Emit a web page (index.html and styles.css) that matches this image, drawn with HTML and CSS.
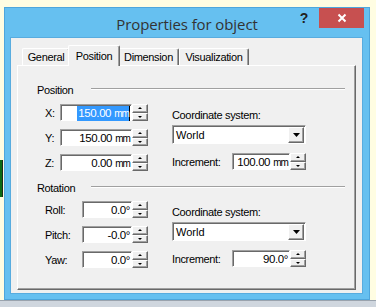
FILE: index.html
```html
<!DOCTYPE html>
<html>
<head>
    <meta charset="UTF-8">
    <title>Properties for object</title>
    <link rel="stylesheet" href="styles.css">
</head>
<body>
<div class="screen">
    <div class="desk">
        <div class="gutter"><div class="blob"></div></div>
        <div class="window">
            <div class="titlebar">
                <div></div>
                <div class="title">Properties for object</div>
                <div class="caption">
                    <div class="help">?</div>
                    <div class="close"><svg width="10" height="10" viewBox="0 0 10 10"><path d="M1.5 1.5L8.5 8.5M8.5 1.5L1.5 8.5" stroke="#fff" stroke-width="2"/></svg></div>
                </div>
            </div>
            <div class="client">
                <ul class="tabs">
                    <li class="t-general">General</li>
                    <li class="on">Position</li>
                    <li class="t-dim">Dimension</li>
                    <li class="t-vis">Visualization</li>
                </ul>
                <div class="panel">
                    <!-- position -->
                    <div class="group">
                        <div class="group-head"><span>Position</span><i class="rule"></i></div>
                        <div class="group-body">
                            <div class="fields">
                                <div class="row"><label class="lab">X:</label>
                                    <div class="spin wide"><div class="edit"><span class="sel">150.00<small>mm</small></span></div><div class="updown"><b class="up"></b><b class="down"></b></div></div>
                                </div>
                                <div class="row"><label class="lab">Y:</label>
                                    <div class="spin wide"><div class="edit">150.00<small>mm</small></div><div class="updown"><b class="up"></b><b class="down"></b></div></div>
                                </div>
                                <div class="row"><label class="lab">Z:</label>
                                    <div class="spin wide"><div class="edit">0.00<small>mm</small></div><div class="updown"><b class="up"></b><b class="down"></b></div></div>
                                </div>
                            </div>
                            <div class="opts">
                                <div class="opt-label">Coordinate system:</div>
                                <div class="combo"><span>World</span><div class="drop"><svg width="7" height="4" viewBox="0 0 7 4"><path d="M0 0H7L3.5 4Z"/></svg></div></div>
                                <div class="row inc"><label class="lab-inc">Increment:</label>
                                    <div class="spin inc-box"><div class="edit">100.00<small>mm</small></div><div class="updown"><b class="up"></b><b class="down"></b></div></div>
                                </div>
                            </div>
                        </div>
                    </div>
                    <!-- rotation -->
                    <div class="group rot">
                        <div class="group-head"><span>Rotation</span><i class="rule"></i></div>
                        <div class="group-body">
                            <div class="fields">
                                <div class="row"><label class="lab long">Roll:</label>
                                    <div class="spin narrow"><div class="edit">0.0&deg;</div><div class="updown"><b class="up"></b><b class="down"></b></div></div>
                                </div>
                                <div class="row"><label class="lab long">Pitch:</label>
                                    <div class="spin narrow"><div class="edit">-0.0&deg;</div><div class="updown"><b class="up"></b><b class="down"></b></div></div>
                                </div>
                                <div class="row"><label class="lab long">Yaw:</label>
                                    <div class="spin narrow"><div class="edit">0.0&deg;</div><div class="updown"><b class="up"></b><b class="down"></b></div></div>
                                </div>
                            </div>
                            <div class="opts">
                                <div class="opt-label">Coordinate system:</div>
                                <div class="combo"><span>World</span><div class="drop"><svg width="7" height="4" viewBox="0 0 7 4"><path d="M0 0H7L3.5 4Z"/></svg></div></div>
                                <div class="row inc"><label class="lab-inc">Increment:</label>
                                    <div class="spin inc-box"><div class="edit">90.0&deg;</div><div class="updown"><b class="up"></b><b class="down"></b></div></div>
                                </div>
                            </div>
                        </div>
                    </div>
                </div>
            </div>
        </div>
        <div class="gutter-r"></div>
    </div>
    <div class="taskbar"></div>
</div>
</body>
</html>
```

FILE: styles.css
```css
*{margin:0;padding:0;box-sizing:border-box;}
body{background:#fffde2;font:11px/13px "Liberation Sans",Arial,sans-serif;color:#000;letter-spacing:-0.35px;}
ul,li{list-style:none;}
.screen{width:376px;height:307px;display:flex;flex-direction:column;overflow:hidden;}
.desk{display:flex;height:300px;}
.gutter{width:4px;}
.blob{margin-top:160px;width:3px;height:37px;background:#0b6a12;border-right:1px solid #1c2a1c;}
.gutter-r{flex:1;}
.taskbar{flex:1;background:#cfd6de;border-top:1px solid #9aa3ad;}

/* window frame */
.window{width:366px;height:293px;margin-top:7px;background:#66c0f0;border:1px solid #4ea6dc;display:flex;flex-direction:column;}
.titlebar{height:30px;display:grid;grid-template-columns:1fr auto 1fr;align-items:center;}
.title{font:15px/20px "Open Sans",sans-serif;color:#333;letter-spacing:-0.1px;padding-top:1px;}
.caption{justify-self:end;align-self:start;display:flex;gap:2px;margin-right:5px;}
.help{width:26px;height:20px;font:bold 14px/20px "Liberation Sans",Arial,sans-serif;color:#222;text-align:center;letter-spacing:0;}
.close{width:45px;height:20px;background:#c75050;display:flex;align-items:center;justify-content:center;}
.client{flex:1;margin:0 7px 6px 6px;background:#f0f0f0;padding:7px 6px 3px 6px;display:flex;flex-direction:column;box-shadow:0 0 0 1px #58acdf;}

/* tabs */
.tabs{display:flex;align-items:flex-end;height:21px;padding-left:5px;margin-bottom:-1px;position:relative;z-index:2;}
.tabs li{height:17px;margin-bottom:1px;border:1px solid;border-color:#fff #696969 transparent #fff;border-bottom:0;border-radius:2px 2px 0 0;box-shadow:inset -1px 0 #a0a0a0;background:#f0f0f0;display:flex;align-items:center;justify-content:center;padding-top:1px;}
.tabs .t-general{width:48px;}
.tabs .t-dim{width:61px;}
.tabs .t-vis{width:70px;}
.tabs li.on{width:52px;height:21px;margin:0 -2px;position:relative;z-index:3;padding-top:0;}
.panel{flex:1;position:relative;z-index:1;border:1px solid;border-color:#fff #696969 #696969 #fff;box-shadow:inset -1px -1px #a0a0a0;padding-top:18px;}

/* groups */
.group-head{display:flex;align-items:center;height:13px;margin:0 10px 0 19px;}
.group-head span{width:54px;}
.rule{flex:1;height:2px;border-top:1px solid #a0a0a0;border-bottom:1px solid #fff;margin-top:-3px;}
.group-body{display:flex;margin-top:7px;padding-left:27px;}
.rot{margin-top:11px;}
.rot .group-body{margin-top:6px;}
.fields{display:flex;flex-direction:column;gap:8px;}
.row{display:flex;align-items:center;height:17px;}
.lab{width:15px;padding-top:2px;}
.lab.long{width:37px;}
.opts{margin-left:24px;display:flex;flex-direction:column;}
.opt-label{margin-top:5px;}
.inc{margin-top:9px;}
.lab-inc{width:60px;padding-top:1px;}

/* edit + up/down */
.spin{display:flex;height:17px;}
.spin.wide{width:88px;}
.spin.narrow{width:66px;}
.spin.inc-box{width:74px;}
.edit{flex:1;background:#fff;border:1px solid;border-color:#a0a0a0 #fff #fff #a0a0a0;box-shadow:inset 1px 1px #696969;display:flex;align-items:center;justify-content:flex-end;padding:1px 1px 0 0;font-size:11.5px;letter-spacing:-0.4px;white-space:nowrap;}
.edit small{font-size:10px;letter-spacing:-0.9px;margin-left:3px;}
.sel{background:#3399ff;color:#fff;line-height:14px;padding-left:1px;border-right:1px solid #000;}
.updown{width:16px;display:flex;flex-direction:column;}
.updown b{flex:1;background:#f0f0f0;border:1px solid;border-color:#fff #696969 #696969 #fff;box-shadow:inset -1px -1px #a0a0a0;display:flex;align-items:center;justify-content:center;}
.updown .up:after{content:"";border:2px solid transparent;border-top:0;border-bottom:2px solid #000;}
.updown .down:after{content:"";border:2px solid transparent;border-bottom:0;border-top:2px solid #000;}

/* combo */
.combo{width:134px;height:19px;margin-top:3px;background:#fff;border:1px solid;border-color:#a0a0a0 #fff #fff #a0a0a0;box-shadow:inset 1px 1px #696969;display:flex;align-items:center;padding:1px 1px 0 3px;letter-spacing:0;}
.drop{margin-left:auto;width:16px;height:16px;background:#f0f0f0;border:1px solid;border-color:#fff #696969 #696969 #fff;box-shadow:inset -1px -1px #a0a0a0;display:flex;align-items:center;justify-content:center;}
.drop svg{display:block;}
```
